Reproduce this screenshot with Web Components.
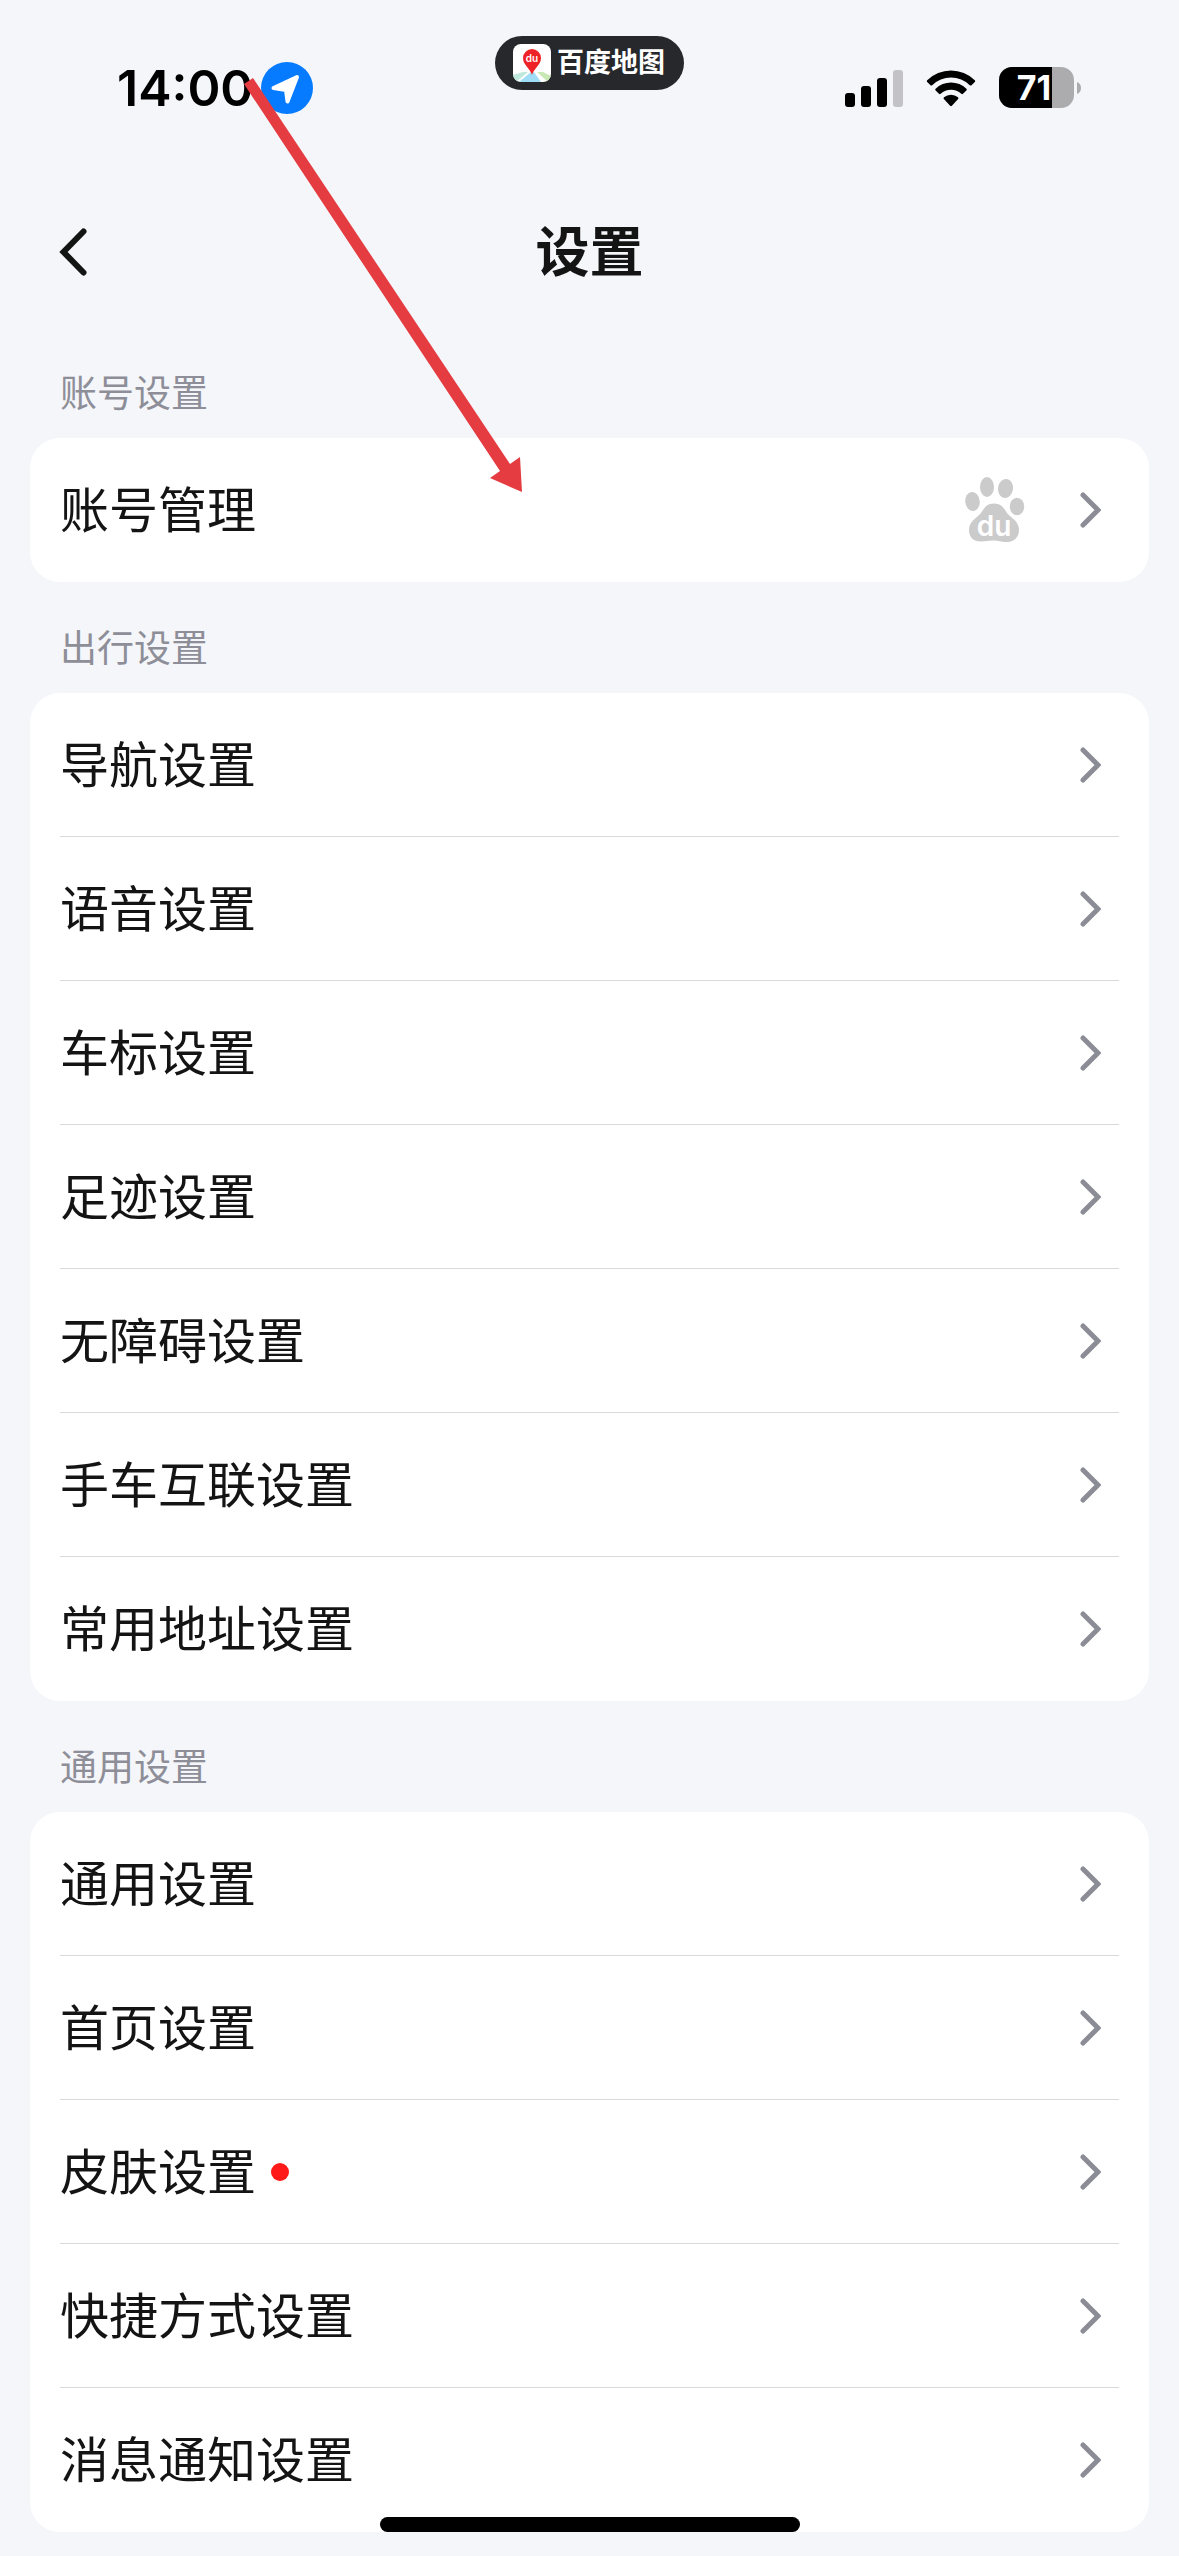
<!DOCTYPE html>
<html lang="zh-CN">
<head>
<meta charset="utf-8">
<meta name="viewport" content="width=device-width, initial-scale=1">
<title>设置</title>
<style>
  body {
    margin: 0;
    min-height: 100vh;
    background: #f4f6fa;
    color: #141414;
    font-family: Inter, "Noto Sans CJK SC", sans-serif;
  }
</style>
</head>
<body>

<status-bar time="14:00" battery="71"></status-bar>
<nav-header>设置</nav-header>

<main>
  <settings-group label="账号设置">
    <settings-row>账号管理<baidu-paw slot="extra"></baidu-paw></settings-row>
  </settings-group>

  <settings-group label="出行设置">
    <settings-row>导航设置</settings-row>
    <settings-row>语音设置</settings-row>
    <settings-row>车标设置</settings-row>
    <settings-row>足迹设置</settings-row>
    <settings-row>无障碍设置</settings-row>
    <settings-row>手车互联设置</settings-row>
    <settings-row>常用地址设置</settings-row>
  </settings-group>

  <settings-group label="通用设置">
    <settings-row>通用设置</settings-row>
    <settings-row>首页设置</settings-row>
    <settings-row dot>皮肤设置</settings-row>
    <settings-row>快捷方式设置</settings-row>
    <settings-row>消息通知设置</settings-row>
  </settings-group>
</main>

<home-indicator></home-indicator>
<pointer-arrow></pointer-arrow>

<script>
class BaseElement extends HTMLElement {
  constructor() {
    super();
    this.attachShadow({ mode: 'open' });
    this.shadowRoot.innerHTML = this.render();
  }
}

class StatusBar extends BaseElement {
  render() {
    return `
      <style>
        :host {
          display: grid;
          grid-template-columns: 1fr auto 1fr;
          height: 177px;
          color: #000;
        }
        .left, .right {
          display: flex;
          align-items: center;
          padding-bottom: 2px;
        }
        .left {
          padding-left: 117px;
          gap: 8px;
        }
        .right {
          justify-content: flex-end;
          padding-right: 98px;
          gap: 23px;
        }
        time {
          font-size: 50px;
          font-weight: 600;
          line-height: 60px;
        }
        .island {
          display: flex;
          align-items: center;
          gap: 6px;
          box-sizing: border-box;
          height: 54px;
          margin-top: 36px;
          padding: 0 19px 0 18px;
          border-radius: 27px;
          background: #26282c;
          color: #fff;
          font-size: 27px;
          font-weight: 700;
          line-height: 54px;
        }
        svg {
          display: block;
          flex: none;
        }
      </style>
      <div class="left">
        <time></time>
        <svg width="52" height="52" viewBox="0 0 52 52">
          <circle cx="26" cy="26" r="26" fill="#067bff"/>
          <path d="M12.500 26 36 15 26.500 39.500 25 28Z" fill="#fff" stroke="#fff" stroke-width="4" stroke-linejoin="round"/>
        </svg>
      </div>
      <div class="island">
        <svg width="38" height="38" viewBox="0 0 38 38">
          <defs><clipPath id="tile"><rect width="38" height="38" rx="8"/></clipPath></defs>
          <g clip-path="url(#tile)">
            <rect width="38" height="38" fill="#fff"/>
            <path d="M0 31 10 28 15 28 3 38H0Z" fill="#bfe8dc"/>
            <path d="M6 38 18 28H21L28 38Z" fill="#9fdcf5"/>
            <path d="M24 28H30L38 32V38H35Z" fill="#c8e8b4"/>
          </g>
          <path d="M19 31C17 24 10 21 10 14A9 9 0 0 1 28 14C28 21 21 24 19 31Z" fill="#ee2327"/>
          <text x="19" y="18" text-anchor="middle" font-family="Inter, sans-serif" font-size="10" font-weight="600" fill="#fff">du</text>
        </svg>
        <span>百度地图</span>
      </div>
      <div class="right">
        <svg width="58" height="38" viewBox="0 0 58 38">
          <rect x="0" y="24" width="10" height="14" rx="3"/>
          <rect x="16" y="17" width="10" height="21" rx="3"/>
          <rect x="32" y="9" width="10" height="29" rx="3"/>
          <rect x="48" y="1" width="10" height="37" rx="3" fill="#c3c3c7"/>
        </svg>
        <svg width="50" height="38" viewBox="0 0 50 38">
          <path d="M1.200 11.200a34 34 0 0 1 47.600 0q.8.9 0 1.700l-3.300 3.300q-.8.800-1.700 0a27 27 0 0 0-37.600 0q-.9.800-1.700 0L1.200 12.900q-.8-.8 0-1.700Z"/>
          <path d="M9.600 19.700a22 22 0 0 1 30.800 0q.8.900 0 1.700l-3.400 3.400q-.8.800-1.700 0a15 15 0 0 0-20.600 0q-.9.800-1.700 0l-3.400-3.400q-.8-.8 0-1.700Z"/>
          <path d="M18 28.200a11 11 0 0 1 14 0q.9.900.1 1.800l-6.200 6.700q-.9.900-1.800 0L17.900 30q-.8-.9.100-1.800Z"/>
        </svg>
        <svg width="82" height="42" viewBox="0 0 82 42">
          <defs><clipPath id="cell"><rect width="75" height="41" rx="13"/></clipPath></defs>
          <g clip-path="url(#cell)">
            <rect width="75" height="41" fill="#acacae"/>
            <rect width="53" height="41"/>
          </g>
          <path d="M78 15q4 1.500 4 6t-4 6Z" fill="#acacae"/>
          <text class="level" x="35" y="33" text-anchor="middle" font-family="Inter, sans-serif" font-size="34" font-weight="700" fill="#fff"></text>
        </svg>
      </div>
    `;
  }

  connectedCallback() {
    this.shadowRoot.querySelector('time').textContent = this.getAttribute('time');
    this.shadowRoot.querySelector('.level').textContent = this.getAttribute('battery');
  }
}

class NavHeader extends BaseElement {
  render() {
    return `
      <style>
        :host {
          display: grid;
          grid-template-columns: 1fr auto 1fr;
          align-items: center;
          height: 150px;
        }
        button {
          justify-self: start;
          padding: 20px 20px 20px 58px;
          border: 0;
          background: none;
        }
        svg {
          display: block;
        }
        h1 {
          margin: 0;
          padding-top: 2px;
          font-size: 54px;
          font-weight: 700;
          line-height: 72px;
        }
      </style>
      <button type="button" aria-label="返回">
        <svg width="30" height="48" viewBox="0 0 30 48" fill="none" stroke="#141414" stroke-width="6" stroke-linecap="round">
          <path d="M25.500 3.500 5.500 24 25.500 44.500"/>
        </svg>
      </button>
      <h1><slot></slot></h1>
    `;
  }
}

class SettingsGroup extends BaseElement {
  render() {
    return `
      <style>
        :host {
          display: block;
          padding: 0 30px;
        }
        h2 {
          margin: 0;
          padding: 43px 30px 20px;
          color: #8e8e98;
          font-size: 37px;
          font-weight: 400;
          line-height: 48px;
        }
        .card {
          border-radius: 30px;
          background: #fff;
        }
      </style>
      <h2></h2>
      <div class="card"><slot></slot></div>
    `;
  }

  connectedCallback() {
    this.shadowRoot.querySelector('h2').textContent = this.getAttribute('label');
  }
}

class SettingsRow extends BaseElement {
  render() {
    return `
      <style>
        :host {
          display: block;
          padding: 0 30px;
        }
        a {
          display: flex;
          align-items: center;
          box-sizing: border-box;
          height: 144px;
          padding-right: 18px;
          border-bottom: 1px solid #d9d9dc;
          color: inherit;
          text-decoration: none;
        }
        :host(:last-of-type) a {
          border-bottom-color: transparent;
        }
        .label {
          padding-top: 2px;
          font-size: 49px;
          line-height: 72px;
        }
        .dot {
          display: none;
          width: 18px;
          height: 18px;
          margin-left: 15px;
          border-radius: 50%;
          background: #ff1a1a;
        }
        :host([dot]) .dot {
          display: block;
        }
        .end {
          display: flex;
          align-items: center;
          gap: 55px;
          margin-left: auto;
        }
      </style>
      <a href="#">
        <span class="label"><slot></slot></span>
        <span class="dot"></span>
        <span class="end">
          <slot name="extra"></slot>
          <svg width="21" height="36" viewBox="0 0 21 36" fill="none" stroke="#8c8c96" stroke-width="5" stroke-linecap="round">
            <path d="M3 3 18 18 3 33"/>
          </svg>
        </span>
      </a>
    `;
  }
}

class BaiduPaw extends BaseElement {
  render() {
    return `
      <style>
        :host {
          display: block;
        }
        svg {
          display: block;
        }
      </style>
      <svg width="60" height="66" viewBox="0 0 60 66" fill="#cbcbcb">
        <ellipse cx="22" cy="10" rx="7" ry="10"/>
        <ellipse cx="40.500" cy="11.500" rx="7.500" ry="9.500" transform="rotate(8 40.500 11.500)"/>
        <ellipse cx="7.500" cy="24.500" rx="7.200" ry="9.500" transform="rotate(-6 7.500 24.500)"/>
        <ellipse cx="52" cy="29.500" rx="7.200" ry="8.800"/>
        <path d="M29 26.500C36 26.500 39 31 42 36C46 41 54 44 54 53C54 61 48 65 41 65C36 65 34 63.500 28 63.500C23 63.500 21 64.500 16 64.500C8 64.500 4 60 4 53C4 44 12 41 16 36C19 31 22 26.500 29 26.500Z"/>
        <text x="29" y="59" text-anchor="middle" font-family="Inter, sans-serif" font-size="28" font-weight="600" fill="#fff">du</text>
      </svg>
    `;
  }
}

class HomeIndicator extends BaseElement {
  render() {
    return `
      <style>
        :host {
          position: fixed;
          right: 0;
          bottom: 24px;
          left: 0;
          display: flex;
          justify-content: center;
          pointer-events: none;
        }
        div {
          width: 420px;
          height: 15px;
          border-radius: 8px;
          background: #000;
        }
      </style>
      <div></div>
    `;
  }
}

// red arrow drawn over the page, from the clock to the first card
class PointerArrow extends BaseElement {
  render() {
    return `
      <style>
        :host {
          position: absolute;
          top: 0;
          left: 0;
          pointer-events: none;
        }
        svg {
          display: block;
        }
      </style>
      <svg width="530" height="500" viewBox="0 0 530 500">
        <path d="M244 84 253 78 510 464 520 457 522 492 490 478 500 471Z" fill="#e43c40"/>
      </svg>
    `;
  }
}

customElements.define('status-bar', StatusBar);
customElements.define('nav-header', NavHeader);
customElements.define('settings-group', SettingsGroup);
customElements.define('settings-row', SettingsRow);
customElements.define('baidu-paw', BaiduPaw);
customElements.define('home-indicator', HomeIndicator);
customElements.define('pointer-arrow', PointerArrow);
</script>
</body>
</html>
